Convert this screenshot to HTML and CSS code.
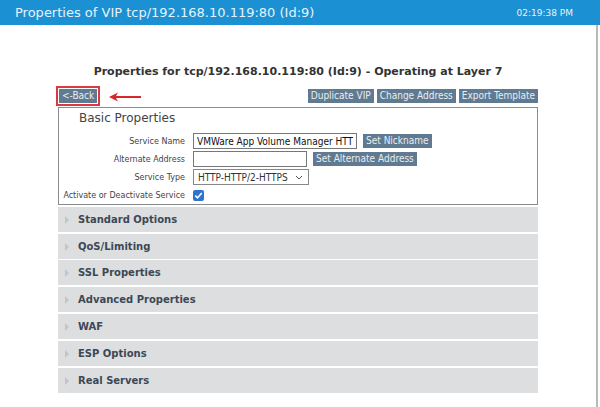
FILE: index.html
```html
<!DOCTYPE html>
<html lang="en">
<head>
    <meta charset="UTF-8">
    <title>Properties of VIP</title>
    <link rel="stylesheet" href="styles.css">
</head>
<body>
    <div class="topbar">
        <span class="topbar-title">Properties of VIP tcp/192.168.10.119:80 (Id:9)</span>
        <span class="topbar-time">02:19:38 PM</span>
    </div>
    <div class="page">
        <div class="content">
            <h2 class="vip-heading">Properties for tcp/192.168.10.119:80 (Id:9) - Operating at Layer 7</h2>
            <div class="toolbar">
                <div class="back-wrap">
                    <span class="back-mark"><button class="btn">&lt;-Back</button></span>
                    <svg class="arrow" width="34" height="10" viewBox="0 0 34 10">
                        <path d="M1 5 L10 0.5 L8 4 L33 4 L33 6 L8 6 L10 9.5 Z" fill="#d8262b"/>
                    </svg>
                </div>
                <div class="actions">
                    <button class="btn">Duplicate VIP</button>
                    <button class="btn">Change Address</button>
                    <button class="btn">Export Template</button>
                </div>
            </div>
            <div class="basic-box">
                <div class="box-title">Basic Properties</div>
                <div class="field-row">
                    <label class="field-label">Service Name</label>
                    <input class="text-input wide" type="text" value="VMWare App Volume Manager HTTP">
                    <button class="btn">Set Nickname</button>
                </div>
                <div class="field-row">
                    <label class="field-label">Alternate Address</label>
                    <input class="text-input" type="text" value="">
                    <button class="btn">Set Alternate Address</button>
                </div>
                <div class="field-row">
                    <label class="field-label">Service Type</label>
                    <div class="select-box">HTTP-HTTP/2-HTTPS
                        <svg width="8" height="5" viewBox="0 0 8 5"><path d="M1 1 L4 4 L7 1" fill="none" stroke="#555" stroke-width="1"/></svg>
                    </div>
                </div>
                <div class="field-row">
                    <label class="field-label">Activate or Deactivate Service</label>
                    <span class="check">
                        <svg width="11" height="11" viewBox="0 0 11 11"><path d="M2.3 5.6 L4.5 7.8 L8.8 3" fill="none" stroke="#fff" stroke-width="1.6"/></svg>
                    </span>
                </div>
            </div>
            <div class="section">Standard Options</div>
            <div class="section">QoS/Limiting</div>
            <div class="section">SSL Properties</div>
            <div class="section">Advanced Properties</div>
            <div class="section">WAF</div>
            <div class="section">ESP Options</div>
            <div class="section">Real Servers</div>
        </div>
    </div>
</body>
</html>
```

FILE: styles.css
```css
body {
    margin: 0;
    font-family: "DejaVu Sans", Verdana, sans-serif;
    color: #333;
    background: #fff;
}

.topbar {
    height: 25px;
    background-color: #1b90d2;
    display: flex;
    align-items: center;
    justify-content: space-between;
    padding: 0 27px 0 15px;
}

.topbar-title {
    color: #e6f3fb;
    font-size: 13px;
}

.topbar-time {
    color: #e6f3fb;
    font-size: 9px;
}

.page {
    width: 598px;
    height: 382px;
    border-right: 2px solid #b7b9bb;
    box-sizing: border-box;
}

.content {
    width: 480px;
    margin: 0 auto;
    padding-top: 40px;
}

.vip-heading {
    margin: 0 0 9px;
    text-align: center;
    font-size: 11px;
    color: #333;
}

.toolbar {
    display: flex;
    justify-content: space-between;
    align-items: center;
    height: 18px;
}

.back-wrap {
    display: flex;
    align-items: center;
    gap: 8px;
}

.back-mark {
    display: inline-flex;
    border: 2px solid #d83a40;
    padding: 1px;
    margin-left: -2px;
}

.arrow {
    margin-top: 1px;
}

.actions {
    display: flex;
    gap: 3px;
}

.btn {
    font-family: "DejaVu Sans Condensed", "DejaVu Sans", sans-serif;
    font-stretch: condensed;
    font-size: 10px;
    background-color: #5f7a91;
    color: #e9eef2;
    border: none;
    padding: 1px 3px;
    line-height: 12px;
}

.basic-box {
    border: 1px solid #8a8d90;
    padding: 3px 0 0;
    margin-top: 2px;
}

.box-title {
    font-size: 12px;
    color: #444;
    padding-left: 20px;
    margin-bottom: 7px;
}

.field-row {
    display: flex;
    align-items: center;
    height: 18px;
}

.field-label {
    width: 126px;
    text-align: right;
    font-size: 8px;
    color: #444;
    margin-right: 8px;
    white-space: nowrap;
}

.text-input {
    font-family: "DejaVu Sans Condensed", "DejaVu Sans", sans-serif;
    font-stretch: condensed;
    font-size: 10px;
    width: 114px;
    height: 16px;
    box-sizing: border-box;
    border: 1px solid #777;
    padding: 0 3px;
    color: #111;
    margin-right: 6px;
}

.text-input.wide {
    width: 164px;
}

.select-box {
    display: flex;
    align-items: center;
    gap: 7px;
    font-family: "DejaVu Sans Condensed", "DejaVu Sans", sans-serif;
    font-stretch: condensed;
    font-size: 10px;
    white-space: nowrap;
    color: #333;
    height: 16px;
    box-sizing: border-box;
    border: 1px solid #888;
    padding: 0 4px;
    width: 116px;
}

.check {
    display: inline-flex;
    width: 11px;
    height: 11px;
    background: #2f73d0;
    border-radius: 2px;
}

.section {
    background-color: #dcdedf;
    height: 25px;
    margin-top: 1.8px;
    display: flex;
    align-items: center;
    padding-left: 20px;
    font-size: 10px;
    font-weight: bold;
    color: #3c4856;
    position: relative;
}

.section::before {
    content: "";
    position: absolute;
    left: 7px;
    top: 9px;
    border-left: 4px solid #c2c5c8;
    border-top: 4px solid transparent;
    border-bottom: 4px solid transparent;
}
```
